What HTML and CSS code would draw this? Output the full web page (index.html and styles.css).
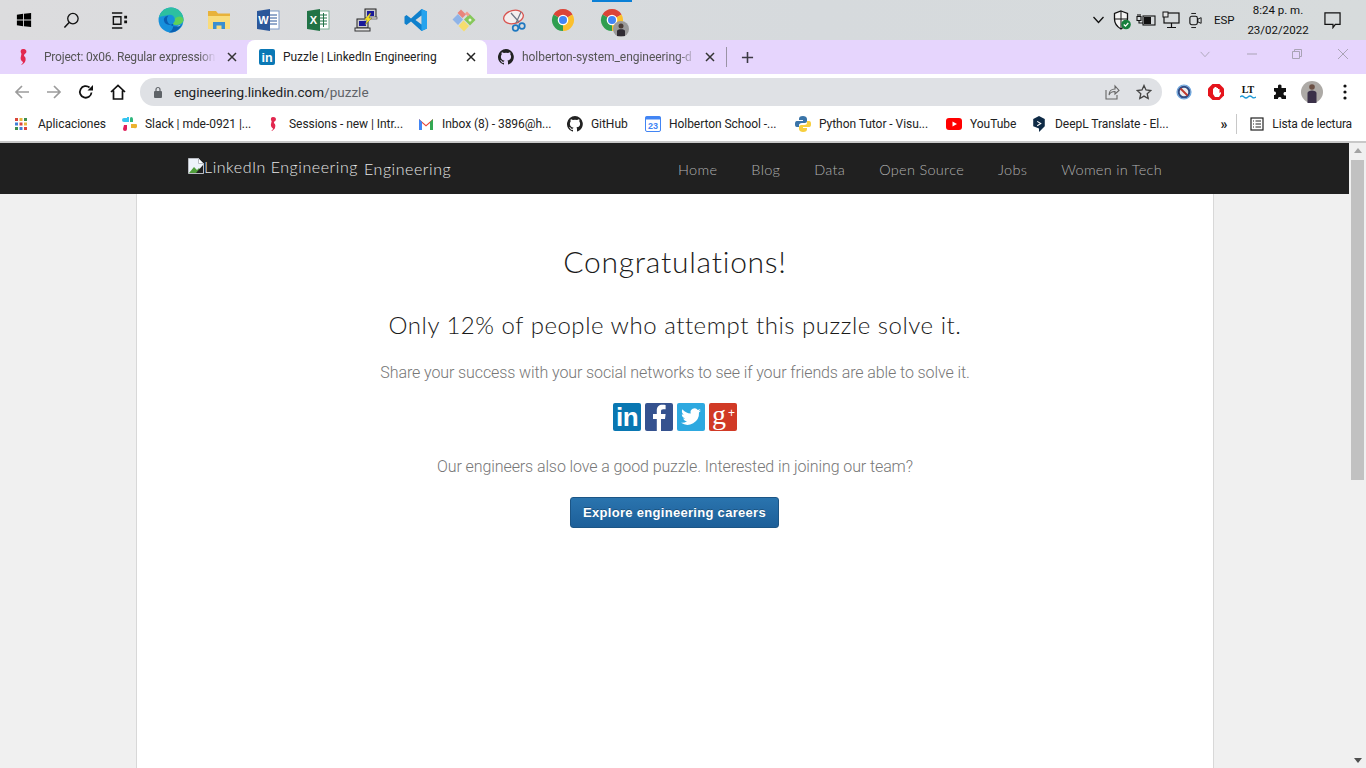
FILE: index.html
```html
<!DOCTYPE html>
<html lang="en">
<head>
<meta charset="utf-8">
<title>Puzzle | LinkedIn Engineering</title>
<link rel="stylesheet" href="styles.css">
</head>
<body>
<div class="taskbar">
  <div class="task-icons">
    <svg class="ti win" viewBox="0 0 18 18"><path d="M1 3l7-1v6.500H1zM9 1.900L17 1v7.500H9zM1 9.500h7V16l-7-1zM9 9.500h8V17l-8-1z" fill="#000"/></svg>
    <svg class="ti search" viewBox="0 0 18 18"><circle cx="10.500" cy="7" r="5.500" fill="none" stroke="#111" stroke-width="1.400"/><path d="M6.500 11L1.500 16.500" stroke="#111" stroke-width="1.600"/></svg>
    <svg class="ti tv" viewBox="0 0 18 18"><path d="M1 1h11M1 17h11M2.500 5h8v8h-8z" fill="none" stroke="#111" stroke-width="1.500"/><path d="M14 4h3v3h-3zM14 9h3v3h-3z" fill="#111"/></svg>
    <svg class="ti edge" viewBox="0 0 24 24"><circle cx="12" cy="12" r="11.500" fill="#1690dc"/><path d="M.8 10C2 4 7 .5 12 .5c6 0 11.500 5 11.500 11 0 3-3 5-6.500 5-2 0-3.500-.5-3-1.500 1-1 2-2 1.500-4C15 8 12 6.500 9 7.500 5 8.500 2 8 .8 10z" fill="#2cc0a0"/><path d="M23.500 11.500c0 3-3 5-6.500 5-2 0-3.500-.5-3-1.500 1-1 2-2 1.500-4 3-3 7-3 8 .5z" fill="#5ed05a"/><path d="M14 15.500c-3 2-8 1-8.500-3C5 10 7 8 9.500 8 6.500 11 9 18 17 18c2 0 4-1 5-2-2 5-6 7.500-10 7.500-1 0-1.500 0-2-.2 3-1 4.500-4 4-7.800z" fill="#0b5fb0"/><path d="M14 15.500c1 2 4 2.500 6 2l1.500-1.500C19 18 15.500 18 14 15.500z" fill="#d8dbde"/></svg>
    <svg class="ti folder" viewBox="0 0 24 24"><path d="M1 3h8l2 2.500h12V21H1z" fill="#e8b23a"/><path d="M1 8h22v13H1z" fill="#f9dc7c"/><path d="M6 21v-7h12v7h-3.500v-3.500h-5V21z" fill="#3a8fd0"/></svg>
    <svg class="ti word" viewBox="0 0 24 24"><rect x="9" y="3" width="14" height="18" fill="#fff" stroke="#7f9bc8"/><path d="M14 7h7M14 10h7M14 13h7M14 16h7" stroke="#2b579a"/><path d="M1 3l13-2v22L1 21z" fill="#2b579a"/><text x="7.500" y="16" class="glyph" text-anchor="middle" font-size="11">W</text></svg>
    <svg class="ti excel" viewBox="0 0 24 24"><rect x="9" y="3" width="14" height="18" fill="#fff" stroke="#7fb296"/><path d="M14 7h7M14 10h7M14 13h7M14 16h7M17.500 5v14" stroke="#217346"/><path d="M1 3l13-2v22L1 21z" fill="#217346"/><text x="7.500" y="16" class="glyph" text-anchor="middle" font-size="11">X</text></svg>
    <svg class="ti putty" viewBox="0 0 24 24"><rect x="11" y="1" width="11" height="9" fill="#ccc" stroke="#222"/><rect x="13" y="3" width="7" height="5" fill="#1a1a9a"/><rect x="3" y="11" width="11" height="9" fill="#ccc" stroke="#222"/><rect x="5" y="13" width="7" height="5" fill="#1a1a9a"/><rect x="1" y="20" width="15" height="3" fill="#e5e5e5" stroke="#333"/><rect x="15" y="9" width="8" height="2" fill="#e5e5e5" stroke="#333" stroke-width=".6"/><path d="M16 5l-6 7h3l-2 5 7-7h-3l2-5z" fill="#f5e020" stroke="#555" stroke-width=".4"/></svg>
    <svg class="ti vscode" viewBox="0 0 24 24"><path d="M17.500 1L23 3.500v17L17.500 23 7 13.500 2.500 17l-2-1.500v-7l2-1.500L7 10.500z" fill="#0f80cc"/><path d="M17.500 1L23 3.500v17L17.500 23z" fill="#25a3ee"/><path d="M17.500 7.500L11.500 12l6 4.500z" fill="#d8dbde"/></svg>
    <svg class="ti git" viewBox="0 0 24 24"><path d="M9 1.500l5 5-3.500 3.500-5-5z" fill="#e8847c"/><path d="M6 6l5 5.500-5 5.500-5.500-5.500z" fill="#8fb4e8"/><path d="M17.500 6l6 6-5.500 5.500-6-6z" fill="#86c85a"/><path d="M11.500 12.500l5.500 5.500-5 5.500-5.500-5.500z" fill="#f6dd6e"/><path d="M13 5.500l2-2 3 3-2 2z" fill="#ef9c90"/><circle cx="18" cy="12" r="1.500" fill="#eaf5dd"/></svg>
    <svg class="ti snip" viewBox="0 0 24 24"><ellipse cx="10.500" cy="9" rx="10" ry="6.500" transform="rotate(-14 10.500 9)" fill="#f4eeee" stroke="#d9534f" stroke-width="1.300"/><path d="M8 5l8 9M18 4l-5 11" stroke="#6d7585" stroke-width="1.200"/><circle cx="19" cy="18" r="2.800" fill="none" stroke="#1f78c0" stroke-width="1.700"/><circle cx="12.500" cy="20" r="2.800" fill="none" stroke="#1f78c0" stroke-width="1.700"/></svg>
    <svg class="ti chrome" viewBox="0 0 24 24"><path d="M2.470 6.500A11 11 0 0 1 21.530 6.500L12 12z" fill="#db4437"/><path d="M21.530 6.500A11 11 0 0 1 12 23L12 12z" fill="#fbc02d"/><path d="M12 23A11 11 0 0 1 2.470 6.500L12 12z" fill="#2f9e4f"/><circle cx="12" cy="12" r="5.300" fill="#fff"/><circle cx="12" cy="12" r="4" fill="#4285f4"/></svg>
    <span class="chrome-wrap">
      <span class="active-mark"></span>
      <svg class="ti chrome" viewBox="0 0 24 24"><path d="M2.470 6.500A11 11 0 0 1 21.530 6.500L12 12z" fill="#db4437"/><path d="M21.530 6.500A11 11 0 0 1 12 23L12 12z" fill="#fbc02d"/><path d="M12 23A11 11 0 0 1 2.470 6.500L12 12z" fill="#2f9e4f"/><circle cx="12" cy="12" r="5.300" fill="#fff"/><circle cx="12" cy="12" r="4" fill="#4285f4"/></svg>
      <svg class="person-badge" viewBox="0 0 16 16"><circle cx="8" cy="8" r="8" fill="#9a9a9a"/><circle cx="8" cy="5" r="2.500" fill="#4a3c36"/><path d="M4 15V10c0-2.500 8-2.500 8 0v5z" fill="#2f2b33"/></svg>
    </span>
  </div>
  <div class="tray">
    <svg class="chev" viewBox="0 0 12 8"><path d="M1 1l5 5.500L11 1" fill="none" stroke="#111" stroke-width="1.300"/></svg>
    <svg class="shield" viewBox="0 0 18 20"><path d="M8 1l6.500 2.500V9c0 5-3 8-6.500 10C4.500 17 1.500 14 1.500 9V3.500z" fill="#f4f4f4" stroke="#111" stroke-width="1.300"/><path d="M8 1v18M1.500 9h13" stroke="#111"/><circle cx="13" cy="14.500" r="4.800" fill="#17803d"/><path d="M10.800 14.500l1.700 1.700 2.800-3.200" fill="none" stroke="#fff" stroke-width="1.200"/></svg>
    <svg class="power" viewBox="0 0 20 14"><rect x="7" y="3" width="12" height="9" fill="none" stroke="#111" stroke-width="1.100"/><rect x="8" y="4" width="7" height="7" fill="#111"/><path d="M1 3.500h4v4H1zM3 7.500V10h4M2 1v2.500M4 1v2.500" fill="none" stroke="#111" stroke-width="1.100"/></svg>
    <svg class="net" viewBox="0 0 18 18"><rect x="2" y="2" width="15" height="10" fill="none" stroke="#111" stroke-width="1.200"/><path d="M9.500 12v4M5 16.500h9" stroke="#111" stroke-width="1.200"/><rect x="1" y="1" width="5" height="5" fill="#e5e5e5" stroke="#111"/></svg>
    <svg class="cam" viewBox="0 0 16 20"><rect x="2" y="5.500" width="8" height="9" rx="2" fill="none" stroke="#111" stroke-width="1.200"/><path d="M10.500 8.500l3.500-1.500v6l-3.500-1.500z" fill="none" stroke="#111"/><path d="M3.500 2.500h5M3.500 17.500h5" stroke="#111"/></svg>
    <span class="lang">ESP</span>
    <div class="clock"><span>8:24 p. m.</span><span>23/02/2022</span></div>
    <svg class="notif" viewBox="0 0 18 18"><path d="M1 1h16v12h-5l-2.500 3.500V13H1z" fill="none" stroke="#111" stroke-width="1.300"/></svg>
  </div>
</div>

<div class="tabstrip">
  <div class="tab inactive">
    <svg class="fav seahorse" viewBox="0 0 10 18"><path d="M5 1c3 0 4 2 3 4-1 1-2 1-2 3 2 1 2 4 1 6-1 1-3 3-4 3 1-1 2-2 2-3-2-1-3-3-2-6 0-1 1-2 0-3-1-2 0-4 2-4z" fill="#e2284f"/></svg>
    <span class="tab-title fade first-title">Project: 0x06. Regular expression</span>
    <svg class="close" viewBox="0 0 10 10"><path d="M1 1l8 8M9 1L1 9" stroke="#333" stroke-width="1.500"/></svg>
  </div>
  <div class="tab active">
    <svg class="fav" viewBox="0 0 16 16"><rect width="16" height="16" rx="2" fill="#0a78b5"/><text x="8" y="13" class="glyph" text-anchor="middle" font-size="12.500">in</text></svg>
    <span class="tab-title">Puzzle | LinkedIn Engineering</span>
    <svg class="close" viewBox="0 0 10 10"><path d="M1 1l8 8M9 1L1 9" stroke="#222" stroke-width="1.500"/></svg>
  </div>
  <div class="tab inactive third">
    <svg class="fav" viewBox="0 0 16 16"><path d="M8 0a8 8 0 0 0-2.500 15.600c.4.100.5-.2.500-.4v-1.400c-2.200.5-2.700-1-2.700-1-.4-.9-.9-1.200-.9-1.200-.7-.5.100-.5.100-.5.800.1 1.200.8 1.200.8.700 1.200 1.900.9 2.300.7.100-.5.300-.9.500-1.100-1.800-.2-3.600-.9-3.600-4 0-.9.300-1.600.8-2.100-.1-.2-.4-1 .1-2.100 0 0 .7-.2 2.200.8a7.600 7.600 0 0 1 4 0c1.500-1 2.200-.8 2.200-.8.400 1.100.2 1.900.1 2.100.5.600.8 1.300.8 2.100 0 3.100-1.900 3.700-3.700 3.900.3.300.6.800.6 1.500v2.200c0 .2.100.5.600.4A8 8 0 0 0 8 0z" fill="#222"/></svg>
    <span class="tab-title fade">holberton-system_engineering-d</span>
    <svg class="close" viewBox="0 0 10 10"><path d="M1 1l8 8M9 1L1 9" stroke="#333" stroke-width="1.500"/></svg>
  </div>
  <span class="tab-sep"></span>
  <svg class="newtab" viewBox="0 0 14 14"><path d="M7 1v12M1 7h12" stroke="#3c3a44" stroke-width="1.700"/></svg>
  <div class="win-ctrl">
    <svg class="wc-chev" viewBox="0 0 12 8"><path d="M1 1l5 5.500L11 1" fill="none" stroke="#a9a3b5" stroke-width="1"/></svg>
    <svg class="wc-min" viewBox="0 0 12 12"><path d="M1 6h10" stroke="#a9a3b5"/></svg>
    <svg class="wc-max" viewBox="0 0 12 12"><path d="M1.500 3.500h7v7h-7zM3.500 3.500v-2h7v7h-2" fill="none" stroke="#a9a3b5"/></svg>
    <svg class="wc-close" viewBox="0 0 12 12"><path d="M1 1l10 10M11 1L1 11" stroke="#a9a3b5"/></svg>
  </div>
</div>

<div class="toolbar">
  <svg class="nav-ic first" viewBox="0 0 16 16"><path d="M15 8H2M8 2L2 8l6 6" fill="none" stroke="#9c9c9c" stroke-width="1.700"/></svg>
  <svg class="nav-ic" viewBox="0 0 16 16"><path d="M1 8h13M8 2l6 6-6 6" fill="none" stroke="#9c9c9c" stroke-width="1.700"/></svg>
  <svg class="nav-ic" viewBox="0 0 16 16"><path d="M13.500 8.500A5.800 5.800 0 1 1 11.500 3.500" fill="none" stroke="#111" stroke-width="1.800"/><path d="M9.500 6.500H15V1z" fill="#111"/></svg>
  <svg class="nav-ic" viewBox="0 0 16 16"><path d="M1 8l7-6.500L15 8M3.500 6.500V15h9V6.500" fill="none" stroke="#111" stroke-width="1.700"/></svg>
  <div class="omnibox">
    <svg class="lock" viewBox="0 0 10 12"><rect x="1" y="5" width="8" height="7" rx="1" fill="#5f6368"/><path d="M3 5V3.500a2 2 0 0 1 4 0V5" fill="none" stroke="#5f6368" stroke-width="1.200"/></svg>
    <span class="url">engineering.linkedin.com<span class="url-path">/puzzle</span></span>
    <svg class="share" viewBox="0 0 16 16"><path d="M2 6v9h11v-4" fill="none" stroke="#666" stroke-width="1.100"/><path d="M5 11c0-4 3-6 6-6V2l4 4.500L11 10V7.500c-3 0-5 1-6 3.500z" fill="none" stroke="#666" stroke-width="1.100"/></svg>
    <svg class="star" viewBox="0 0 16 16"><path d="M8 1.500l2 4.500 4.800.5-3.600 3.200 1 4.800L8 12.100l-4.200 2.400 1-4.800L1.200 6.500 6 6z" fill="none" stroke="#444" stroke-width="1.300"/></svg>
  </div>
  <div class="ext">
    <svg class="ext-a" viewBox="0 0 16 16"><circle cx="8" cy="8" r="7" fill="#d8dde8" stroke="#6aa6e0" stroke-width="1.200"/><circle cx="8" cy="8" r="5.300" fill="#eee" stroke="#2f4c86" stroke-width="2"/><path d="M4.500 4.500l7 7" stroke="#c0392f" stroke-width="2"/></svg>
    <svg class="ext-b" viewBox="0 0 18 18"><path d="M5.500 1h7L17 5.500v7L12.500 17h-7L1 12.500v-7z" fill="#e5141c"/><path d="M6 8V5.500h1V4.500h1V4h1.500v1H11v1h1.500v4l1.500-1v1.500L12 14H8l-2-3z" fill="#fff"/></svg>
    <span class="ext-c"><span class="lt">LT</span><svg class="wave" viewBox="0 0 16 4"><path d="M0 2q2-2 4 0t4 0 4 0 4 0" fill="none" stroke="#1e9ad6" stroke-width="1.200"/></svg></span>
    <svg class="ext-d" viewBox="0 0 16 16"><path d="M6 1.500a2 2 0 0 1 3.500 0V4H14v4h-1.500a2 2 0 0 0 0 3.500H14V15H9.500v-1a2 2 0 0 0-3.500 0v1H2v-4h1a2 2 0 0 0 0-3.500H2V4h4z" fill="#111"/></svg>
    <svg class="avatar" viewBox="0 0 22 22"><circle cx="11" cy="11" r="11" fill="#adaaa6"/><circle cx="11" cy="6" r="2.800" fill="#6b5044"/><path d="M6.500 22V12c0-3.500 9-3.500 9 0v10z" fill="#3a3048"/></svg>
    <svg class="menu" viewBox="0 0 4 16"><circle cx="2" cy="2" r="1.600" fill="#111"/><circle cx="2" cy="8" r="1.600" fill="#111"/><circle cx="2" cy="14" r="1.600" fill="#111"/></svg>
  </div>
</div>

<div class="bookmarks">
  <div class="bm"><svg class="bm-ic" viewBox="0 0 12 12"><rect x="0" y="0" width="3" height="3" fill="#d9453a"/><rect x="4.500" y="0" width="3" height="3" fill="#e8b53a"/><rect x="9" y="0" width="3" height="3" fill="#3f8f4e"/><rect x="0" y="4.500" width="3" height="3" fill="#3f7fd8"/><rect x="4.500" y="4.500" width="3" height="3" fill="#d9453a"/><rect x="9" y="4.500" width="3" height="3" fill="#e8b53a"/><rect x="0" y="9" width="3" height="3" fill="#3f8f4e"/><rect x="4.500" y="9" width="3" height="3" fill="#3f7fd8"/><rect x="9" y="9" width="3" height="3" fill="#d9453a"/></svg><span>Aplicaciones</span></div>
  <div class="bm"><svg class="bm-ic lg" viewBox="0 0 16 16"><path d="M6 1h2v5H3a2 2 0 0 1 0-4h3z" fill="#36c5f0"/><path d="M10 1a2 2 0 0 1 2 2v3h-3V3a2 2 0 0 1 1-2z" fill="#2eb67d"/><path d="M10 8h5a2 2 0 0 1-2 4h-3z" fill="#ecb22e"/><path d="M3 9h3v4a2 2 0 0 1-4 0z" fill="#e01e5a"/></svg><span>Slack | mde-0921 |...</span></div>
  <div class="bm"><svg class="bm-ic lg" viewBox="0 0 10 18"><path d="M5 1c3 0 4 2 3 4-1 1-2 1-2 3 2 1 2 4 1 6-1 1-3 3-4 3 1-1 2-2 2-3-2-1-3-3-2-6 0-1 1-2 0-3-1-2 0-4 2-4z" fill="#e2284f"/></svg><span>Sessions - new | Intr...</span></div>
  <div class="bm"><svg class="bm-ic lg" viewBox="0 0 16 12"><path d="M1 12V1l7 6 7-6v11h-3V5L8 8.500 4 5v7z" fill="#ea4335"/><path d="M1 12V1l3 3v8z" fill="#4285f4"/><path d="M12 12V4l3-3v11z" fill="#34a853"/></svg><span>Inbox (8) - 3896@h...</span></div>
  <div class="bm"><svg class="bm-ic lg" viewBox="0 0 16 16"><path d="M8 0a8 8 0 0 0-2.500 15.600c.4.100.5-.2.500-.4v-1.400c-2.200.5-2.700-1-2.700-1-.4-.9-.9-1.200-.9-1.200-.7-.5.100-.5.100-.5.800.1 1.200.8 1.200.8.700 1.200 1.900.9 2.300.7.100-.5.300-.9.500-1.100-1.800-.2-3.600-.9-3.600-4 0-.9.300-1.600.8-2.100-.1-.2-.4-1 .1-2.100 0 0 .7-.2 2.200.8a7.600 7.600 0 0 1 4 0c1.500-1 2.200-.8 2.200-.8.400 1.100.2 1.900.1 2.100.5.600.8 1.300.8 2.100 0 3.100-1.900 3.700-3.700 3.900.3.300.6.800.6 1.500v2.200c0 .2.100.5.600.4A8 8 0 0 0 8 0z" fill="#222"/></svg><span>GitHub</span></div>
  <div class="bm"><svg class="bm-ic lg" viewBox="0 0 16 16"><rect x="0.500" y="0.500" width="15" height="15" rx="1.500" fill="#fff" stroke="#4285f4"/><rect x="0.500" y="0.500" width="15" height="3" fill="#4285f4"/><text x="8" y="13" class="cal" text-anchor="middle" font-size="9">23</text></svg><span>Holberton School -...</span></div>
  <div class="bm"><svg class="bm-ic lg" viewBox="0 0 16 16"><path d="M8 0c-3 0-4 1-4 3v1h4v1H2C0 5 0 7 0 8s0 3 2 3h2V9c0-1 1-2 3-2h3c1 0 2-1 2-2V3c0-2-2-3-4-3z" fill="#3a74a8"/><path d="M8 16c3 0 4-1 4-3v-1H8v-1h6c2 0 2-2 2-3s0-3-2-3h-2v2c0 1-1 2-3 2H6c-1 0-2 1-2 2v2c0 2 2 3 4 3z" fill="#f7cf3e"/></svg><span>Python Tutor - Visu...</span></div>
  <div class="bm"><svg class="bm-ic lg" viewBox="0 0 16 12"><rect width="16" height="12" rx="3" fill="#f00"/><path d="M6.500 3.500v5L11 6z" fill="#fff"/></svg><span>YouTube</span></div>
  <div class="bm"><svg class="bm-ic lg" viewBox="0 0 14 18"><path d="M7 0l6.500 3.500v8L7 18v-4L.5 11.500v-8z" fill="#0f2b46"/><path d="M5 6l4 2.500L5 11" fill="none" stroke="#fff" stroke-width="1.200"/></svg><span>DeepL Translate - El...</span></div>
  <div class="bm-end">
    <span class="more">»</span>
    <span class="bm-sep"></span>
    <svg class="read" viewBox="0 0 14 14"><rect x="1" y="1" width="12" height="12" fill="none" stroke="#222" stroke-width="1.200"/><path d="M5.500 4H11M5.500 7H11M5.500 10H11M3 4h1M3 7h1M3 10h1" stroke="#222"/></svg>
    <span class="read-label">Lista de lectura</span>
  </div>
</div>

<div class="viewport">
  <div class="page">
    <header class="site-nav">
      <div class="brand">
        <span class="broken-img"><svg class="broken" viewBox="0 0 16 16"><path d="M.5.500h10l5 5v10H.5z" fill="#eef3fa" stroke="#b9bcc2"/><path d="M10.500.500v5h5z" fill="#fff" stroke="#b9bcc2"/><path d="M1 15l5-6 3 3 2-2 4 5z" fill="#4f9d3a"/><path d="M8 15l7-8v8z" fill="#202020"/></svg>LinkedIn Engineering</span>
        <span class="brand-name">Engineering</span>
      </div>
      <nav class="links">
        <a>Home</a><a>Blog</a><a>Data</a><a>Open Source</a><a>Jobs</a><a>Women in Tech</a>
      </nav>
    </header>
    <main class="content">
      <h1>Congratulations!</h1>
      <h2>Only 12% of people who attempt this puzzle solve it.</h2>
      <p class="share-text">Share your success with your social networks to see if your friends are able to solve it.</p>
      <div class="social">
        <span class="soc li"><span class="soc-in">in</span></span>
        <span class="soc fb"><svg viewBox="0 0 28 28"><path d="M16 28V16h4l.6-5H16V8.500c0-1.500.5-2.300 2.300-2.300h2.300V2c-.5 0-1.800-.2-3.300-.2-3.300 0-5.500 2-5.500 5.700V11H8v5h3.800v12z" fill="#fff"/></svg></span>
        <span class="soc tw"><svg viewBox="0 0 28 28"><path d="M24 7.500c-.8.400-1.500.6-2.400.7.900-.5 1.500-1.300 1.800-2.300-.8.500-1.700.8-2.600 1a4 4 0 0 0-7 3.700c-3.400-.2-6.400-1.800-8.400-4.300-1 1.900-.5 4.100 1.300 5.400-.7 0-1.300-.2-1.900-.5 0 2 1.400 3.700 3.300 4.100-.6.200-1.200.2-1.900.1.500 1.600 2 2.800 3.800 2.800A8.300 8.300 0 0 1 4 19.800 11.600 11.600 0 0 0 22 9.500c.8-.5 1.500-1.200 2-2z" fill="#fff"/></svg></span>
        <span class="soc gp"><span class="gp-g">g</span><span class="gp-plus">+</span></span>
      </div>
      <p class="join-text">Our engineers also love a good puzzle. Interested in joining our team?</p>
      <a class="cta">Explore engineering careers</a>
    </main>
  </div>
  <div class="scrollbar">
    <svg class="sb-arrow up" viewBox="0 0 8 5"><path d="M4 0l4 5H0z" fill="#a3a3a3"/></svg>
    <div class="sb-thumb"></div>
    <div class="sb-fill"></div>
    <svg class="sb-arrow" viewBox="0 0 8 5"><path d="M4 5L0 0h8z" fill="#505050"/></svg>
  </div>
</div>
</body>
</html>
```

FILE: styles.css
```css
* { box-sizing: border-box; }
html, body { margin: 0; height: 768px; overflow: hidden; }
body { font-family: Roboto, "Liberation Sans", Arial, sans-serif; background: #fff; display: flex; flex-direction: column; }
svg { display: block; flex: none; }
.glyph { font-family: "Liberation Sans", sans-serif; font-weight: 700; fill: #fff; }
.cal { font-family: "Liberation Sans", sans-serif; font-weight: 700; fill: #4285f4; }

.taskbar { height: 40px; flex: none; display: flex; align-items: center; justify-content: space-between; background: linear-gradient(90deg, #dcdcde, #d6dadd 60%, #d7dbdc); }
.task-icons { display: flex; align-items: center; padding-left: 16px; }
.ti { width: 24px; height: 24px; }
.win { width: 16px; height: 16px; margin-right: 31px; }
.search { width: 17px; height: 17px; margin-right: 31px; }
.tv { width: 17px; height: 17px; margin-right: 30px; }
.edge { width: 26px; height: 26px; margin-right: 23px; }
.folder { margin-right: 25px; }
.word { margin-right: 26px; }
.excel { margin-right: 24px; }
.putty { margin-right: 26px; }
.vscode { margin-right: 24px; }
.git { margin-right: 27px; }
.snip { margin-right: 24px; }
.chrome { margin-right: 25px; }
.chrome-wrap { position: relative; display: block; }
.chrome-wrap .chrome { margin: 0; }
.active-mark { position: absolute; left: -8px; top: -8px; width: 40px; height: 2px; background: #0a7fd6; }
.person-badge { position: absolute; right: -5px; bottom: -5px; width: 16px; height: 16px; }
.tray { display: flex; align-items: center; padding-right: 25px; color: #111; }
.chev { width: 13px; height: 8px; margin-right: 8px; }
.shield { width: 18px; height: 20px; margin-right: 5px; }
.power { width: 20px; height: 14px; margin-right: 6px; }
.net { width: 18px; height: 18px; margin-right: 8px; }
.cam { width: 15px; height: 19px; margin-right: 11px; }
.lang { font-size: 11.500px; width: 29px; }
.clock { width: 60px; margin-left: 5px; margin-right: 16px; font-size: 11.500px; line-height: 20px; display: flex; flex-direction: column; align-items: center; white-space: nowrap; }
.notif { width: 17px; height: 17px; }

.tabstrip { height: 34px; flex: none; background: #e6d5fd; display: flex; align-items: center; }
.tab { height: 34px; display: flex; align-items: center; font-size: 12px; }
.tab.inactive { width: 247px; padding-left: 18px; color: #555; }
.tab.third { width: 239px; padding-left: 11px; }
.tab.active { width: 240px; padding-left: 12px; background: #fff; border-radius: 8px 8px 0 0; color: #222; }
.fav { width: 16px; height: 16px; margin-right: 8px; }
.seahorse { width: 10px; height: 18px; margin-right: 16px; }
.tab-title { width: 172px; white-space: nowrap; overflow: hidden; letter-spacing: -.05px; }
.first-title { letter-spacing: -.2px; }
.tab.active .tab-title { width: 183px; }
.tab.third .tab-title { width: 174px; }
.fade { -webkit-mask-image: linear-gradient(90deg, #000 90%, transparent); mask-image: linear-gradient(90deg, #000 90%, transparent); }
.close { width: 10px; height: 10px; margin-left: 11px; }
.tab.active .close { margin-left: 0; }
.tab.third .close { margin-left: 9px; }
.tab-sep { width: 1px; height: 20px; background: #9a93a5; }
.newtab { width: 13px; height: 13px; margin-left: 14px; }
.win-ctrl { margin-left: auto; display: flex; align-items: center; height: 34px; padding-bottom: 6px; padding-right: 17px; }
.wc-chev { width: 12px; height: 7px; margin-right: 35px; }
.wc-min { width: 12px; height: 12px; margin-right: 33px; }
.wc-max { width: 12px; height: 12px; margin-right: 34px; }
.wc-close { width: 12px; height: 12px; }

.toolbar { height: 36px; flex: none; background: #fff; display: flex; align-items: center; }
.nav-ic { width: 16px; height: 16px; margin-left: 16px; }
.nav-ic.first { margin-left: 14px; }
.omnibox { margin-left: 14px; width: 1022px; height: 28px; border-radius: 14px; background: #dfe1e5; display: flex; align-items: center; padding-left: 13px; }
.lock { width: 10px; height: 12px; margin-right: 11px; }
.url { font-size: 13.500px; color: #202124; }
.url-path { color: #5f6368; }
.share { width: 16px; height: 16px; margin-left: auto; margin-right: 16px; }
.star { width: 16px; height: 16px; margin-right: 10px; }
.ext { flex: 1; display: flex; align-items: center; padding-left: 14px; }
.ext-a { width: 16px; height: 16px; margin-right: 16px; }
.ext-b { width: 18px; height: 18px; margin-left: -1px; margin-right: 15px; }
.ext-c { display: flex; flex-direction: column; align-items: center; width: 16px; margin-right: 16px; }
.lt { font-size: 10px; font-weight: 700; line-height: 10px; color: #111; font-family: "Liberation Serif", serif; }
.wave { width: 16px; height: 4px; }
.ext-d { width: 16px; height: 16px; margin-right: 13px; }
.avatar { width: 22px; height: 22px; margin-right: 20px; }
.menu { width: 4px; height: 16px; }

.bookmarks { height: 33px; flex: none; background: #fff; border-bottom: 2px solid #c8c8c8; display: flex; align-items: center; padding-left: 15px; padding-bottom: 3px; font-size: 12px; letter-spacing: -.05px; color: #222; white-space: nowrap; }
.bm { display: flex; align-items: center; }
.bm-ic { width: 12px; height: 12px; margin-right: 11px; }
.bm-ic.lg { width: 16px; height: 16px; margin-right: 8px; }
.bm:nth-child(1) { width: 106px; }
.bm:nth-child(2) { width: 144px; }
.bm:nth-child(3) { width: 153px; }
.bm:nth-child(4) { width: 149px; }
.bm:nth-child(5) { width: 78px; }
.bm:nth-child(6) { width: 150px; }
.bm:nth-child(7) { width: 151px; }
.bm:nth-child(8) { width: 85px; }
.bm-end { margin-left: auto; display: flex; align-items: center; padding-right: 14px; }
.more { font-size: 14px; font-weight: 700; margin-right: 9px; }
.bm-sep { width: 1px; height: 20px; background: #c8c8c8; margin-right: 13px; }
.read { width: 14px; height: 14px; margin-right: 8px; }
.read-label { letter-spacing: -.12px; }

.viewport { flex: 1; display: flex; min-height: 0; }
.page { flex: 1; min-width: 0; background: #f0f0f0; display: flex; flex-direction: column; }
.site-nav { height: 51px; flex: none; background: #202020; display: flex; align-items: center; justify-content: space-between; padding: 0 187px 0 188px; font-family: Lato, sans-serif; font-weight: 300; color: #e6e6e6; }
.brand { display: flex; align-items: center; }
.broken-img { display: flex; align-items: flex-start; font-size: 16px; letter-spacing: .55px; margin-right: 6px; line-height: 18px; margin-top: -4px; }
.broken { width: 16px; height: 16px; }
.brand-name { font-size: 16px; letter-spacing: .55px; line-height: 20px; margin-top: 1px; }
.links { display: flex; gap: 34px; font-size: 14.500px; letter-spacing: .3px; color: #b0b0b0; padding-top: 1px; }
.content { flex: 1; width: 1078px; margin-left: 136px; background: #fff; border: 1px solid #d8d8d8; border-width: 0 1px; display: flex; flex-direction: column; align-items: center; color: #1a1a1a; }
h1 { margin: 48px 0 0; font-family: Lato, sans-serif; font-weight: 300; font-size: 30px; line-height: 38px; letter-spacing: .75px; }
h2 { margin: 31px 0 0; font-family: Lato, sans-serif; font-weight: 300; font-size: 24px; line-height: 28px; letter-spacing: .53px; }
.share-text, .join-text { margin: 0; font-family: Roboto, sans-serif; font-size: 16px; line-height: 20px; letter-spacing: -.1px; color: #777; font-weight: 300; }
.share-text { margin-top: 24px; }
.social { display: flex; gap: 4px; margin-top: 20px; }
.soc { width: 28px; height: 28px; border-radius: 2px; display: block; position: relative; color: #fff; font-family: "Liberation Sans", sans-serif; }
.li { background: #0977b2; }
.fb { background: #35528f; }
.tw { background: #2ea9e0; }
.gp { background: #d13a26; }
.soc-in { display: block; text-align: center; font-weight: 700; font-size: 26px; line-height: 28px; letter-spacing: -.5px; }
.gp-g { position: absolute; left: 3px; top: 0; font-family: "Liberation Serif", serif; font-size: 28px; line-height: 24px; }
.gp-plus { position: absolute; right: 2px; top: 3px; font-size: 12px; line-height: 14px; }
.join-text { margin-top: 26px; }
.cta { margin-top: 20px; margin-right: 1px; width: 209px; height: 31px; border-radius: 3px; background: linear-gradient(#2a74ae, #1d5f99); border: 1px solid #1c5585; color: #fff; font-family: "Liberation Sans", sans-serif; font-weight: 700; font-size: 13px; letter-spacing: .3px; text-shadow: 0 -1px 0 rgba(0,0,0,.25); display: flex; align-items: center; justify-content: center; }

.scrollbar { width: 17px; flex: none; background: #f0f0f0; display: flex; flex-direction: column; align-items: center; padding: 5px 0; }
.sb-arrow { width: 8px; height: 5px; }
.sb-thumb { width: 13px; height: 320px; background: #c1c1c1; margin-top: 7px; flex: none; align-self: flex-start; margin-left: 2px; }
.sb-fill { flex: 1; }
```
